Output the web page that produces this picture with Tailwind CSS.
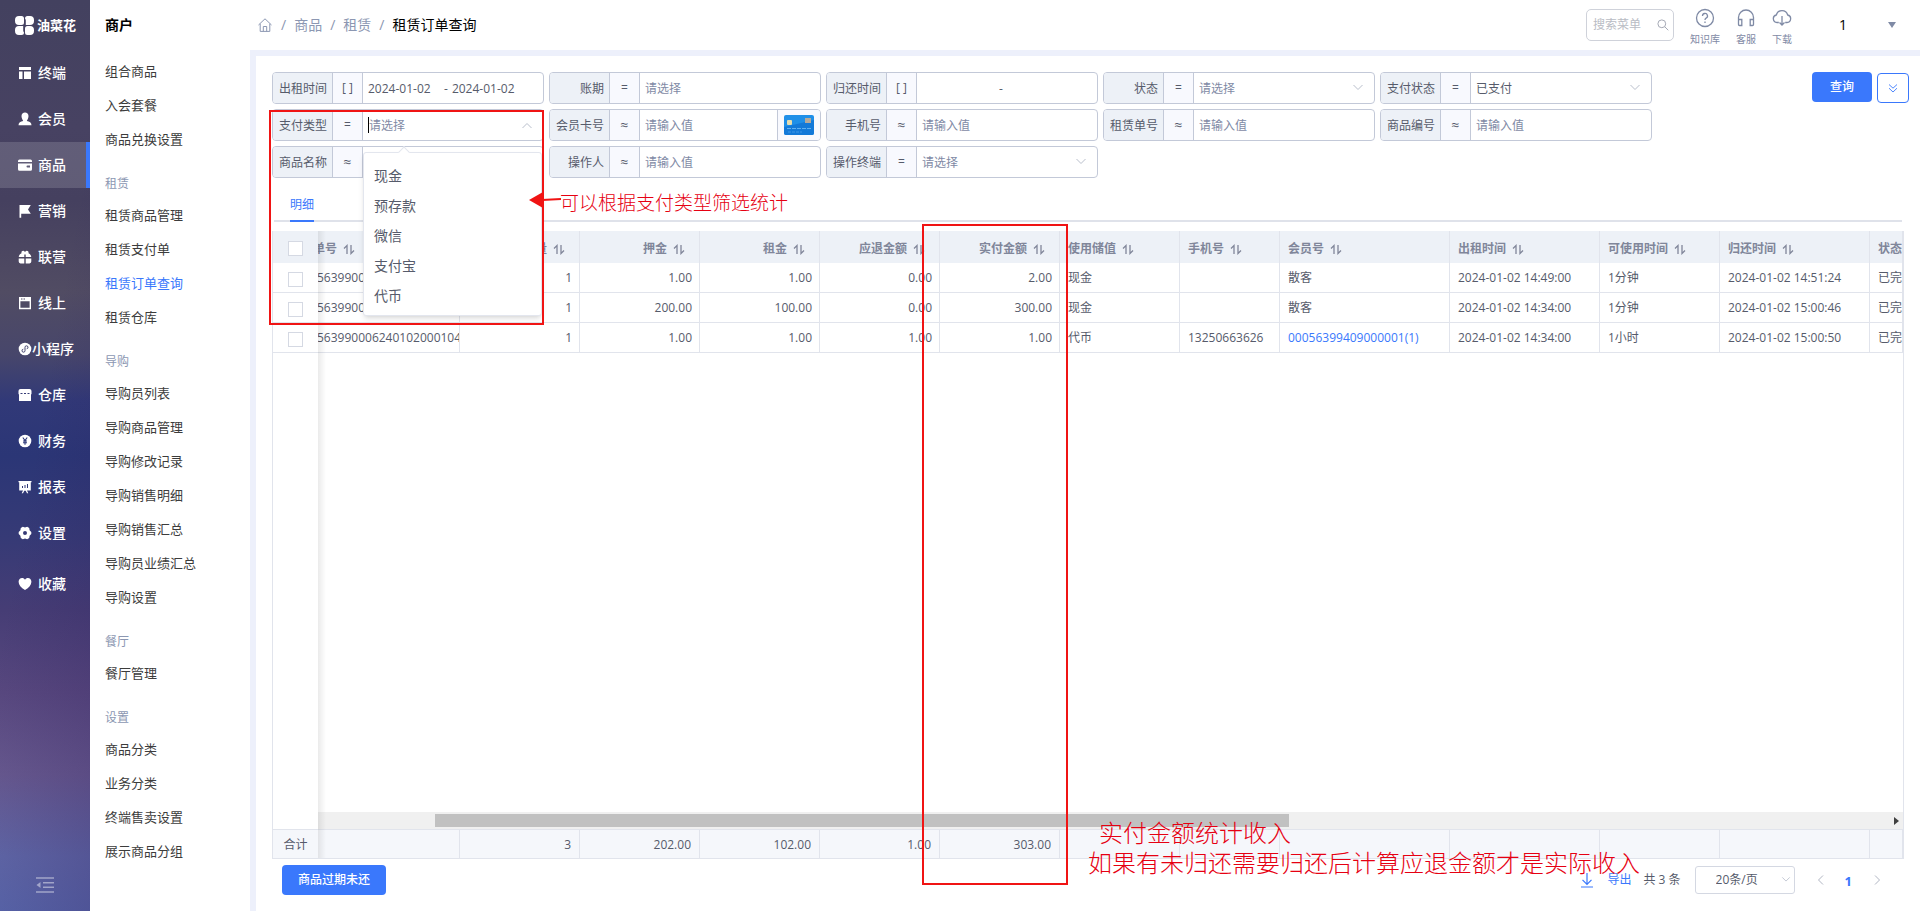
<!DOCTYPE html>
<html lang="zh-CN">
<head>
<meta charset="utf-8">
<title>租赁订单查询</title>
<script src="https://cdn.jsdelivr.net/npm/@tailwindcss/browser@4"></script>
</head>
<body class="flex h-screen min-h-[760px] overflow-hidden bg-white font-['Open_Sans','Noto_Sans_CJK_SC',sans-serif] text-xs text-[#565b6b]">

<svg class="hidden" aria-hidden="true">
  <symbol id="i-sort" viewBox="0 0 12 12"><path d="M4 11V2.500L1 5.500M8 2v8.500l3-3" fill="none" stroke="currentColor" stroke-width="1.300"/></symbol>
  <symbol id="i-chev" viewBox="0 0 12 12"><path d="M1.500 4 6 8.500 10.500 4" fill="none" stroke="currentColor" stroke-width="1"/></symbol>
</svg>

<!-- Primary navigation -->
<nav class="flex w-[90px] shrink-0 flex-col bg-[linear-gradient(100deg,transparent_45%,rgba(45,25,90,0.25)_100%),linear-gradient(180deg,#43415f_0%,#474262_14%,#45405f_22%,#514c63_32%,#47466b_39%,#313978_44%,#2b3676_50%,#363a76_59%,#463d75_67%,#58487f_76%,#67598f_85%,#6068a8_94%,#5a68ac_100%)] text-sm font-medium text-white">
  <a href="#" class="flex h-[50px] shrink-0 items-center gap-[3px] pl-[15px]">
    <svg class="size-[19px] shrink-0" viewBox="0 0 19 19" fill="#fff"><path d="M4 0h2.500A2.500 2.500 0 0 1 9 2.500V6.500A2.500 2.500 0 0 1 6.500 9H4A4 4 0 0 1 0 5V4A4 4 0 0 1 4 0ZM12.500 0H15a4 4 0 0 1 4 4v1a4 4 0 0 1-4 4h-4.200V4.500A3 3 0 0 0 10 2.500 2.500 2.500 0 0 1 12.500 0ZM4 10h4.200v4.500A3 3 0 0 0 9 16.500 2.500 2.500 0 0 1 6.500 19H4a4 4 0 0 1-4-4v-1A4 4 0 0 1 4 10ZM12.500 10H15a4 4 0 0 1 4 4v1a4 4 0 0 1-4 4h-2.500A2.500 2.500 0 0 1 10 16.500v-4A2.500 2.500 0 0 1 12.500 10Z"/></svg>
    <span class="text-[13px] font-bold whitespace-nowrap">油菜花</span>
  </a>
  <div id="nav" class="flex flex-1 flex-col"></div>
  <button class="mb-4 flex h-5 items-center justify-center text-white/45" aria-label="收起菜单">
    <svg class="h-4 w-[18px]" viewBox="0 0 18 16" fill="none" stroke="currentColor" stroke-width="1.600"><path d="M0 1h18M7 5.700h11M7 10.300h11M0 15h18"/><path d="M4.500 5v6L.5 8Z" fill="currentColor" stroke="none"/></svg>
  </button>
</nav>

<!-- Secondary menu -->
<aside class="w-40 shrink-0 pl-[15px] text-[13px] text-[#3c3c3c]">
  <h2 class="mb-[5px] flex h-[50px] items-center text-sm font-bold text-black">商户</h2>
  <div id="sub"></div>
</aside>

<div class="flex min-w-0 flex-1 flex-col">
  <!-- Top bar -->
  <header class="flex h-[50px] shrink-0 items-center pr-6 pl-2">
    <nav class="flex items-center gap-2 text-sm text-[#8c97b2]">
      <a href="#" aria-label="首页" class="mr-px"><svg class="size-[14px]" viewBox="0 0 14 14" fill="none" stroke="currentColor"><path d="M.5 7 7 .8 13.500 7M2.200 5.800v7.600h9.600V5.800M5.300 13.400V8.500h3.400v4.900"/></svg></a>
      <span>/</span><a href="#">商品</a><span>/</span><a href="#">租赁</a><span>/</span><span class="text-black">租赁订单查询</span>
    </nav>
    <div class="ml-auto flex h-8 w-[88px] items-center rounded-[5px] border border-[#cfd2da] pr-1 pl-1.5">
      <input type="text" placeholder="搜索菜单" aria-label="搜索菜单" class="w-0 flex-1 text-xs outline-none placeholder:text-[#b9bcc4]">
      <svg class="size-3" viewBox="0 0 12 12" fill="none" stroke="#a5a9b5"><circle cx="4.800" cy="4.800" r="3.900"/><path d="m7.700 7.700 3.600 3.600"/></svg>
    </div>
    <div class="ml-4 flex gap-4 pt-1 text-[10px] leading-[14px] whitespace-nowrap text-[#7f8aa5]">
      <a href="#" class="flex flex-col items-center gap-1"><svg class="size-5" viewBox="0 0 20 20" fill="none" stroke="currentColor" stroke-width="1.300"><circle cx="10" cy="10" r="8.500"/><path d="M7.500 8a2.500 2.500 0 1 1 3.600 2.200c-.8.4-1.100.9-1.100 1.800"/><path d="M10 13.500v1.400"/></svg>知识库</a>
      <a href="#" class="flex flex-col items-center gap-1"><svg class="size-5" viewBox="0 0 20 20" fill="none" stroke="currentColor" stroke-width="1.300"><path d="M2.500 16V9.500a7.500 7.500 0 0 1 15 0V16M2.500 11.500h3.300v6H3.500a1 1 0 0 1-1-1ZM17.500 11.500h-3.300v6h2.300a1 1 0 0 0 1-1Z"/></svg>客服</a>
      <a href="#" class="flex flex-col items-center gap-1"><svg class="size-5" viewBox="0 0 20 20" fill="none" stroke="currentColor" stroke-width="1.300"><path d="M6.800 14.500H5A3.800 3.800 0 0 1 4.300 7a5.900 5.900 0 0 1 11.400 0A3.800 3.800 0 0 1 15 14.500h-1.800M10 8v9M7.500 14.500 10 17l2.500-2.500"/></svg>下载</a>
    </div>
    <button class="ml-[47px] flex w-[57px] items-center justify-between text-sm text-black">1<svg class="h-[6px] w-2" viewBox="0 0 8 6" fill="#7f8aa5"><path d="M0 0h8L4 6Z"/></svg></button>
  </header>

  <main class="relative flex min-h-0 flex-1 flex-col border-t-[6px] border-l-[6px] border-[#edf0fb] pt-4 pl-4">
    <!-- Filters -->
    <form class="flex items-start justify-between pr-[11px]" onsubmit="return false">
      <div id="filters" class="grid grid-cols-[repeat(5,272px)] gap-[5px]"></div>
      <div class="flex items-start gap-[5px]">
        <button class="h-[30px] w-[60px] rounded bg-[#3a78fc] font-medium text-white">查询</button>
        <button class="mt-px flex h-[30px] w-8 items-center justify-center rounded border border-[#3a78fc] text-[#3a78fc]" aria-label="展开"><svg class="size-[10px]" viewBox="0 0 10 10" fill="none" stroke="currentColor" stroke-width=".9"><path d="M1 1.500 5 5.200 9 1.500M1 5.200 5 9l4-3.800"/></svg></button>
      </div>
    </form>

    <!-- Tabs -->
    <div class="mr-[18px] ml-0.5 flex h-11 shrink-0 border-b-2 border-[#dfe2ea] pl-4">
      <button class="-mb-0.5 h-11 border-b-2 border-[#3a78fc] pt-3 text-[#3a78fc]">明细</button>
    </div>

    <!-- Orders -->
    <section class="relative mt-[9px] mr-4 flex min-h-0 flex-1 flex-col overflow-hidden border-r border-l border-b border-[#e1e4ec]">
      <div class="min-h-0 flex-1 overflow-hidden">
        <table class="w-full table-fixed border-separate border-spacing-0">
          <colgroup class="cols"></colgroup>
          <thead id="thead" class="bg-[#edf1f7] text-[#80869a]"></thead>
          <tbody id="tbody"></tbody>
        </table>
      </div>
      <div class="flex h-[17px] shrink-0 pl-[45px]" aria-hidden="true">
        <div class="flex flex-1 items-center bg-[#f0f0f0] pr-1">
          <div class="ml-[7.400%] h-[13px] w-[54%] bg-[#c1c1c1]"></div>
          <svg class="ml-auto h-2 w-[5px]" viewBox="0 0 5 8" fill="#404040"><path d="M0 0v8l5-4Z"/></svg>
        </div>
      </div>
      <table class="w-full shrink-0 table-fixed border-separate border-spacing-0 bg-[#f5f7fb]">
        <colgroup class="cols"></colgroup>
        <tbody id="tfoot"></tbody>
      </table>
      <div class="pointer-events-none absolute inset-y-0 left-[45px] w-2 bg-linear-to-r from-black/8 to-transparent"></div>
    </section>

    <!-- Footer -->
    <footer class="flex h-[52px] shrink-0 items-start pt-1.5 pr-[37px] pl-[10px]">
      <button class="h-[30px] w-[104px] rounded bg-[#3a78fc] font-medium text-white">商品过期未还</button>
      <div class="ml-auto flex h-[30px] items-center">
        <a href="#" class="flex items-center gap-3.5 text-[#3a78fc]"><svg class="h-[15px] w-3" viewBox="0 0 12 15" fill="none" stroke="currentColor" stroke-width="1.200"><path d="M6 0v11M1.500 6.800 6 11.300l4.500-4.500M0 14h12"/></svg>导出</a>
        <span class="ml-3">共 3 条</span>
        <div class="relative ml-[14px]">
          <select aria-label="每页条数" class="h-7 w-[100px] appearance-none rounded-[3px] border border-[#d4d8e2] bg-white pl-5"><option>20条/页</option></select>
          <svg class="pointer-events-none absolute top-2 right-1 size-2.5 text-[#b9bfcc]"><use href="#i-chev"/></svg>
        </div>
        <button class="ml-5 text-[#b0b5c2]" aria-label="上一页"><svg class="size-3 rotate-90"><use href="#i-chev"/></svg></button>
        <button class="ml-[18px] pt-1 text-[13px] font-bold text-[#3a78fc]">1</button>
        <button class="ml-[19px] text-[#b0b5c2]" aria-label="下一页"><svg class="size-3 -rotate-90"><use href="#i-chev"/></svg></button>
      </div>
    </footer>

    <!-- Open payment type list -->
    <div class="absolute top-[96px] left-[107px] z-10 w-[179px] rounded-[3px] border border-[#e3e6ee] bg-white pt-2 pb-1 text-sm shadow-md">
      <div class="absolute -top-[5px] left-9 size-2 rotate-45 border-t border-l border-[#e3e6ee] bg-white"></div>
      <ul id="pay" role="listbox" aria-label="支付类型"></ul>
    </div>

    <!-- Review marks -->
    <div class="pointer-events-none absolute top-[54px] left-[13px] z-20 h-[215px] w-[275px] border-2 border-[#f01414]"></div>
    <div class="pointer-events-none absolute top-[168px] left-[666px] z-20 h-[661px] w-[146px] border-2 border-[#f01414]"></div>
    <svg class="absolute top-[136px] left-[273px] z-20 h-4 w-8" viewBox="0 0 32 16"><path d="M0 8 14 0v16Z" fill="#f01414"/><path d="M13 8 32 7" stroke="#f01414" stroke-width="2"/></svg>
    <p class="absolute top-[134px] left-[304px] z-20 font-['Liberation_Serif','Noto_Sans_CJK_SC',serif] text-[19px] leading-7 font-light whitespace-nowrap text-[#e60012]">可以根据支付类型筛选统计</p>
    <p class="absolute top-[763px] left-[832px] z-20 font-['Liberation_Serif','Noto_Sans_CJK_SC',serif] text-2xl leading-[30px] font-light whitespace-nowrap text-[#e60012]"><span class="ml-[11px]">实付金额统计收入</span><br>如果有未归还需要归还后计算应退金额才是实际收入</p>
  </main>
</div>

<script>
const $ = id => document.getElementById(id);

const nav = [
  ['终端', '<path d="M1 1h12v3H1ZM1 5.500h3.500V13H1ZM6 5.500h7V13H6Z"/>'],
  ['会员', '<path d="M7 .5a3.500 3.500 0 0 1 3.500 3.700C10.500 6.500 9 8.300 8.800 9c2.700.5 4.700 1.500 4.700 4.300H.5C.5 10.500 2.500 9.500 5.200 9 5 8.300 3.500 6.500 3.500 4.200A3.500 3.500 0 0 1 7 .5Z"/>'],
  ['商品', '<path fill-rule="evenodd" d="M1.500 1.500h11A1.500 1.500 0 0 1 14 3v1H0V3a1.500 1.500 0 0 1 1.500-1.500ZM0 5.500h14v5.700a1.500 1.500 0 0 1-1.500 1.500h-11A1.500 1.500 0 0 1 0 11.200ZM9.500 7.500a1 1 0 0 0 0 2H12v-2Z"/>'],
  ['营销', '<path d="M1.500 1h11.300l-2.800 4.500 2.800 4.200H3.200v4H1.500Z"/>'],
  ['联营', '<path d="M3.500 3.200C3 1 5.500-.2 7 2c1.500-2.200 4-1 3.500 1.200C12 3.800 13 5.200 13.300 7H7.700V4.500H6.300V7H.7C1 5.200 2 3.800 3.500 3.200ZM.7 8.400h5.600v5H2.500A1.800 1.800 0 0 1 .7 11.600ZM7.700 8.400h5.600v3.200a1.800 1.800 0 0 1-1.800 1.800H7.700Z"/>'],
  ['线上', '<path fill-rule="evenodd" d="M1 1h12v12.200H1ZM2.400 5.200v6.600h9.200V5.200ZM3 2.500v1h1.500v-1ZM5.500 2.500v1H7v-1Z"/>'],
  ['小程序', '<circle cx="7" cy="7" r="6.300"/><path d="M5.300 7.200a1.500 1.500 0 1 0 1.700 1.500V5.300a1.500 1.500 0 1 1 1.700 1.500" fill="none" stroke="#45456f" stroke-width="1"/>'],
  ['仓库', '<path fill-rule="evenodd" d="M2.500 1h9A2 2 0 0 1 13.500 3v3.200H13V13H1V6.200H.5V3a2 2 0 0 1 2-2ZM2.500 5v1h2V5ZM6 5v1h2V5ZM9.500 5v1h2V5Z"/>'],
  ['财务', '<circle cx="7" cy="7" r="6.300"/><path d="M4.800 3.500 7 6.500l2.200-3M7 6.500v4.200M5 7h4M5 8.800h4" fill="none" stroke="#2d3878" stroke-width="1.100"/>'],
  ['报表', '<path fill-rule="evenodd" d="M.5 1h13v1.200h-.7v8.300H9l1.300 2.700H9L7.700 10.700H6.300L5 13.200H3.700L5 10.500H1.200V2.200H.5ZM4 6v2h1V6ZM6.500 5v3h1V5ZM9 4v4h1V4Z"/>'],
  ['设置', '<path fill-rule="evenodd" d="M4.800.8 7 1.500 9.200.8l2 1.200.4 2.200L13.300 6v2l-1.700 1.800-.4 2.200-2 1.200L7 12.500l-2.200.7-2-1.200-.4-2.200L.7 8V6l1.700-1.800.4-2.200ZM7 5a2 2 0 1 0 0 4 2 2 0 0 0 0-4Z"/>'],
  ['收藏', '<path d="M7 13C3 10.500.6 8 .6 4.700.6 2.500 2.200 1 4 1c1.300 0 2.400.6 3 1.700C7.600 1.600 8.700 1 10 1c1.800 0 3.400 1.500 3.400 3.700C13.400 8 11 10.500 7 13Z"/>'],
];
$('nav').innerHTML = nav.map(([t, p]) => {
  const icon = `<svg class="size-[14px] shrink-0" viewBox="0 0 14 14" fill="#fff">${p}</svg>`;
  const cls = t === '商品' ? 'flex h-[46px] items-center gap-1.5 border-r-4 border-[#3a78fc] bg-white/15 pl-[18px]'
    : t === '小程序' ? 'flex h-[46px] items-center pl-[18px] whitespace-nowrap'
    : t === '收藏' ? 'mt-[5px] flex h-[46px] items-center gap-1.5 pl-[18px]'
    : 'flex h-[46px] items-center gap-1.5 pl-[18px]';
  return `<a href="#" class="${cls}">${icon}${t}</a>`;
}).join('');

const sub = [
  ['', ['组合商品', '入会套餐', '商品兑换设置']],
  ['租赁', ['租赁商品管理', '租赁支付单', '租赁订单查询', '租赁仓库']],
  ['导购', ['导购员列表', '导购商品管理', '导购修改记录', '导购销售明细', '导购销售汇总', '导购员业绩汇总', '导购设置']],
  ['餐厅', ['餐厅管理']],
  ['设置', ['商品分类', '业务分类', '终端售卖设置', '展示商品分组']],
];
$('sub').innerHTML = sub.map(([h, items]) =>
  (h ? `<h3 class="flex h-[42px] items-center pt-3 text-xs text-[#8c97b2]">${h}</h3>` : '') +
  items.map(t => `<a href="#" class="${t === '租赁订单查询' ? 'flex h-[34px] items-center text-[#3a78fc]' : 'flex h-[34px] items-center'}">${t}</a>`).join('')
).join('');

const filters = [
  ['出租时间', '[ ]', 'date', '2024-01-02'], ['账期', '=', 'text', '请选择'], ['归还时间', '[ ]', 'date', ''],
  ['状态', '=', 'select', '请选择'], ['支付状态', '=', 'select', '已支付'],
  ['支付类型', '=', 'open', '请选择'], ['会员卡号', '≈', 'card', '请输入值'], ['手机号', '≈', 'text', '请输入值'],
  ['租赁单号', '≈', 'text', '请输入值'], ['商品编号', '≈', 'text', '请输入值'],
  ['商品名称', '≈', 'text', '请输入值'], ['操作人', '≈', 'text', '请输入值'], ['操作终端', '=', 'select', '请选择'],
];
const chev = '<svg class="pointer-events-none absolute top-2 right-2.5 size-3 text-[#b9bfcc]"><use href="#i-chev"/></svg>';
const card = '<button type="button" aria-label="读卡" class="flex w-[43px] items-center justify-center border-l border-[#c3c9d8] bg-[#f8f9fe]"><svg class="h-5 w-[30px]" viewBox="0 0 30 20"><rect width="30" height="20" rx="2" fill="#1f8fe8"/><path d="M0 12 30 5v13a2 2 0 0 1-2 2H2a2 2 0 0 1-2-2Z" fill="#1379d8"/><rect x="3" y="5" width="5" height="5" rx="1" fill="#e6dcae"/><rect x="21" y="3" width="6" height="5" fill="#b5a99a"/><path d="M3 13.500h24" stroke="#5fb0f0" stroke-dasharray="4 1"/><path d="M4 17h14" stroke="#3f97e4" stroke-dasharray="3 1"/></svg></button>';
$('filters').innerHTML = filters.map(([l, op, kind, v], i) => {
  const id = 'f' + i;
  const input = `<input id="${id}" type="text" placeholder="${v}" class="w-0 flex-1 pt-px pl-[5px] outline-none placeholder:text-[#7f8aa5]">`;
  let c = input;
  if (kind === 'card') c = input + card;
  if (kind === 'date' && v) c = `<input id="${id}" type="text" value="${v}" class="w-[77px] pt-0.5 pl-[5px] outline-none"><span class="flex items-center px-1 pt-0.5">-</span><input type="text" value="${v}" aria-label="${l}止" class="w-0 flex-1 pt-0.5 outline-none">`;
  if (kind === 'date' && !v) c = `<input id="${id}" type="text" class="w-0 flex-1 outline-none"><span class="flex items-center pt-0.5">-</span><input type="text" aria-label="${l}止" class="mr-3 w-0 flex-1 outline-none">`;
  if (kind === 'select') c = `<select id="${id}" class="${v === '请选择' ? 'flex-1 appearance-none pt-px pl-[5px] text-[#7f8aa5]' : 'flex-1 appearance-none pt-px pl-[5px]'}"><option>${v}</option></select>${chev}`;
  if (kind === 'open') c = `<span class="my-auto ml-[5px] h-4 w-px bg-black"></span><input id="${id}" type="text" role="combobox" aria-expanded="true" aria-controls="pay" placeholder="${v}" class="w-0 flex-1 pt-px outline-none placeholder:text-[#7f8aa5]"><svg class="pointer-events-none absolute top-2.5 right-2.5 size-3 rotate-180 text-[#b9bfcc]"><use href="#i-chev"/></svg>`;
  return `<div class="relative flex h-8 overflow-hidden rounded border border-[#c3c9d8] bg-white">
    <label for="${id}" class="flex w-[60px] shrink-0 items-center justify-end border-r border-[#c3c9d8] bg-[#edf1f7] pt-px pr-[5px] whitespace-nowrap">${l}</label>
    <span class="${op === '≈' ? 'flex w-[30px] shrink-0 items-center justify-center border-r border-[#c3c9d8] bg-[#f8f9fe] text-sm' : 'flex w-[30px] shrink-0 items-center justify-center border-r border-[#c3c9d8] bg-[#f8f9fe]'}">${op}</span>${c}</div>`;
}).join('');

$('pay').innerHTML = ['现金', '预存款', '微信', '支付宝', '代币']
  .map(t => `<li role="option" class="flex h-[30px] items-center pl-2.5">${t}</li>`).join('');

// Column: title, width, right aligned
const cols = [['', 45], ['单号', 142], ['数量', 120, 1], ['押金', 120, 1], ['租金', 120, 1], ['应退金额', 120, 1], ['实付金额', 120, 1],
  ['使用储值', 120], ['手机号', 100], ['会员号', 170], ['出租时间', 150], ['可使用时间', 120], ['归还时间', 150], ['状态', 0]];
document.querySelectorAll('.cols').forEach(g => g.innerHTML = cols.map(c => `<col${c[1] ? ` style="width:${c[1]}px"` : ''}>`).join(''));

const box = '<input type="checkbox" aria-label="选择" class="block mx-auto size-[15px] appearance-none border border-[#d5d9e3] bg-white">';
$('thead').innerHTML = '<tr>' + cols.map(([t, w, r], i) => {
  if (!i) return `<th class="h-8 p-0 pt-0.5">${box}</th>`;
  const sort = t === '状态' ? '' : '<svg class="size-3 shrink-0"><use href="#i-sort"/></svg>';
  const cls = r ? 'flex items-center justify-end gap-1.5 pr-3.5 whitespace-nowrap' : i === 1 ? '-ml-[5px] flex items-center gap-1.5' : 'flex items-center gap-1.5 pl-2 whitespace-nowrap';
  return `<th class="h-8 overflow-hidden border-r border-[#e1e4ec] p-0 pt-[3px] font-bold"><div class="${cls}">${t}${sort}</div></th>`;
}).join('') + '</tr>';

const cell = (v, i) => {
  if (i === 1) return `<td class="h-[30px] overflow-hidden border-r border-b border-[#e1e4ec] p-0 whitespace-nowrap"><div class="-ml-px">${v}</div></td>`;
  if (cols[i][2]) return `<td class="h-[30px] border-r border-b border-[#e1e4ec] p-0 pr-[7px] text-right">${v}</td>`;
  return `<td class="h-[30px] overflow-hidden border-r border-b border-[#e1e4ec] p-0 pl-2 whitespace-nowrap">${v}</td>`;
};
const rows = [
  ['', '563990006240102000106', '1', '1.00', '1.00', '0.00', '2.00', '现金', '', '散客', '2024-01-02 14:49:00', '1分钟', '2024-01-02 14:51:24', '已完成'],
  ['', '563990006240102000105', '1', '200.00', '100.00', '0.00', '300.00', '现金', '', '散客', '2024-01-02 14:34:00', '1分钟', '2024-01-02 15:00:46', '已完成'],
  ['', '563990006240102000104', '1', '1.00', '1.00', '1.00', '1.00', '代币', '13250663626', '<a href="#" class="text-[#3a78fc]">00056399409000001(1)</a>', '2024-01-02 14:34:00', '1小时', '2024-01-02 15:00:50', '已完成'],
];
$('tbody').innerHTML = rows.map(r => '<tr>' + r.map((v, i) => i ? cell(v, i) : `<td class="h-[30px] border-b border-[#e1e4ec] p-0 pt-[3px]">${box}</td>`).join('') + '</tr>').join('');

const sum = ['合计', '', '3', '202.00', '102.00', '1.00', '303.00', '', '', '', '', '', '', ''];
$('tfoot').innerHTML = '<tr>' + sum.map((v, i) =>
  `<td class="${i ? 'h-[29px] border-t border-r border-[#e1e4ec] p-0 pt-px pr-2 text-right' : 'h-[29px] border-t border-[#e1e4ec] p-0 pt-px text-center'}">${v}</td>`).join('') + '</tr>';
</script>
</body>
</html>
